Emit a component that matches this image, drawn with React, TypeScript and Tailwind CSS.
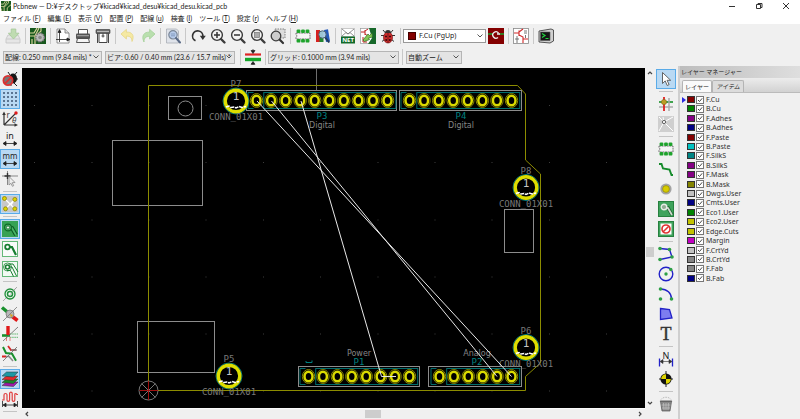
import type { ReactNode } from "react";

const layers = [
  { name: "F.Cu", color: "bg-[#840000]" },
  { name: "B.Cu", color: "bg-[#008400]" },
  { name: "F.Adhes", color: "bg-[#840084]" },
  { name: "B.Adhes", color: "bg-[#000084]" },
  { name: "F.Paste", color: "bg-[#840000]" },
  { name: "B.Paste", color: "bg-[#00c2c2]" },
  { name: "F.SilkS", color: "bg-[#008484]" },
  { name: "B.SilkS", color: "bg-[#840084]" },
  { name: "F.Mask", color: "bg-[#840084]" },
  { name: "B.Mask", color: "bg-[#848400]" },
  { name: "Dwgs.User", color: "bg-[#c2c2c2]" },
  { name: "Cmts.User", color: "bg-[#000084]" },
  { name: "Eco1.User", color: "bg-[#008400]" },
  { name: "Eco2.User", color: "bg-[#c2c200]" },
  { name: "Edge.Cuts", color: "bg-[#c2c200]" },
  { name: "Margin", color: "bg-[#c200c2]" },
  { name: "F.CrtYd", color: "bg-[#c2c2c2]" },
  { name: "B.CrtYd", color: "bg-[#848484]" },
  { name: "F.Fab", color: "bg-[#848484]" },
  { name: "B.Fab", color: "bg-[#000084]" },
];

const menus = [
  { label: "ファイル", mnemonic: "F" },
  { label: "編集", mnemonic: "E" },
  { label: "表示", mnemonic: "V" },
  { label: "配置", mnemonic: "P" },
  { label: "配線", mnemonic: "u" },
  { label: "検査", mnemonic: "I" },
  { label: "ツール", mnemonic: "T" },
  { label: "設定", mnemonic: "r" },
  { label: "ヘルプ", mnemonic: "H" },
];

type Tool = {
  name: string;
  icon: ReactNode;
  active?: boolean;
};

const GREEN = "#1f8f3a";

const magnifier = (
  <>
    <circle cx="7" cy="7" r="5.4" fill="#f4f4f4" stroke="#3c3c3c" strokeWidth="1.4" />
    <path d="M11 11L14.500 14.500" stroke="#3c3c3c" strokeWidth="2.4" strokeLinecap="round" />
  </>
);

const chip = (
  <>
    <path d="M1 5H15V11H1V9.2a1.3 1.3 0 0 0 0-2.4Z" fill="#f6f6f6" stroke="#555" strokeWidth=".8" strokeDasharray="2 .6" />
    {[3.5, 8, 12.5].map((x) => (
      <g key={x} fill="#1ea32c">
        <rect x={x - 1.9} y="1.4" width="3.8" height="3.6" rx="1.2" />
        <rect x={x - 1.9} y="11" width="3.8" height="3.6" rx="1.2" />
      </g>
    ))}
  </>
);

const topGroups: Tool[][] = [
  [
    {
      name: "Save",
      icon: (
        <g opacity=".5">
          <path d="M3 7h10l2 4v4H1v-4Z" fill="#ddd" stroke="#999" strokeWidth=".8" />
          <path d="M1.5 11h13" stroke="#999" strokeWidth=".8" />
          <path d="M6.2 1h4.6v4.2H14L8.5 11 3.4 5.2h2.8Z" fill="#8fc974" stroke="#5da244" strokeWidth=".8" />
        </g>
      ),
    },
  ],
  [
    {
      name: "Footprint editor",
      icon: (
        <>
          <rect width="16" height="16" fill="#17581d" />
          <path d="M0 5h4l3-5M0 8h5l4-8M5 16V9l6-6V0M2 16V11" stroke="#d8d39a" strokeWidth="1.2" fill="none" />
          <circle cx="10" cy="9.5" r="4.3" fill="#bbb" stroke="#777" strokeWidth="1.6" strokeDasharray="1.4 .9" />
          <circle cx="10" cy="9.5" r="1.8" fill="#8a8a8a" />
        </>
      ),
    },
  ],
  [
    {
      name: "Page settings",
      icon: (
        <>
          <path d="M2 1h8l4 4v10H2Z" fill="#fff" stroke="#777" strokeWidth=".8" />
          <path d="M10 1v4h4" fill="#ddd" stroke="#777" strokeWidth=".8" />
          <path d="M4.5 2v12M1 11.5h14M4.5 1.6L3 4.4h3ZM15 11.5l-3-1.5v3Z" fill="#222" stroke="#222" strokeWidth=".8" />
        </>
      ),
    },
    {
      name: "Print",
      icon: (
        <>
          <path d="M3.5 6V1.5h9V6" fill="#fff" stroke="#555" />
          <rect x="1" y="5.5" width="14" height="5.5" rx="1" fill="#555" />
          <rect x="2" y="7" width="12" height="1.3" fill="#999" />
          <path d="M2.5 10.5h11l1 4h-13Z" fill="#f5f5f5" stroke="#444" strokeWidth=".9" />
        </>
      ),
    },
    {
      name: "Plot",
      icon: (
        <>
          <path d="M4 4h8v10.5H4Z" fill="#fff" stroke="#444" />
          <rect x="1" y="1.5" width="14" height="4" rx=".6" fill="#666" stroke="#333" strokeWidth=".6" />
          <path d="M2 3.4h12" stroke="#ddd" strokeWidth=".8" />
          <path d="M2.5 5.5V15M13.5 5.5V15M8 5.5v4M6.5 8h3" stroke="#333" strokeWidth=".9" />
        </>
      ),
    },
  ],
  [
    {
      name: "Undo",
      icon: <path d="M1 6l5.4-4.6v2.8C11.500 3.600 15 7 12 13.500 12 9.500 10 8 6.400 8.200V11Z" fill="#f5e9a3" stroke="#e6d684" strokeWidth=".8" />,
    },
    {
      name: "Redo",
      icon: <path d="M15 6L9.600 1.400v2.800C4 3.600 1 8 4 14 4 10 6 8.200 9.600 8.400V11Z" fill="#b9dfae" stroke="#a5d199" strokeWidth=".8" />,
    },
  ],
  [
    {
      name: "Find",
      icon: (
        <>
          <path d="M1.500 1h10l2 2v12h-12Z" fill="#dfe3ea" stroke="#a8adb5" strokeWidth=".8" />
          <circle cx="8" cy="6.800" r="4.200" fill="#b7cbea" stroke="#7b8797" strokeWidth="1.200" />
          <path d="M5.800 6h4.400M6 7.800h4" stroke="#6d86ad" strokeWidth=".7" />
          <path d="M11 10l4 4.500" stroke="#5a6a86" strokeWidth="2" strokeLinecap="round" />
        </>
      ),
    },
  ],
  [
    {
      name: "Redraw",
      icon: (
        <>
          <path d="M5.500 12.800A5.200 5.200 0 1 1 12.900 8.500" fill="none" stroke="#333" strokeWidth="1.700" />
          <path d="M9.800 7.800h6L12.800 12Z" fill="#333" />
        </>
      ),
    },
    { name: "Zoom in", icon: <>{magnifier}<path d="M4 7h6M7 4v6" stroke="#333" strokeWidth="1.500" /></> },
    { name: "Zoom out", icon: <>{magnifier}<path d="M4 7h6" stroke="#333" strokeWidth="1.500" /></> },
    { name: "Zoom to fit", icon: <>{magnifier}<rect x="4.500" y="4.500" width="5" height="5" fill="#aaa" stroke="#777" strokeWidth=".7" /></> },
    {
      name: "Zoom to selection",
      icon: (
        <>
          <rect x="5" y="1" width="10" height="9" fill="#ddd" stroke="#666" strokeWidth=".8" strokeDasharray="1.500 1" />
          <circle cx="6" cy="8" r="4.800" fill="#ccc" stroke="#3c3c3c" strokeWidth="1.300" />
          <path d="M9.800 11.800l3.200 3.200" stroke="#333" strokeWidth="2.200" strokeLinecap="round" />
        </>
      ),
    },
  ],
  [
    { name: "Footprint viewer", icon: chip },
    {
      name: "Library browser",
      icon: (
        <>
          <rect x="1" y="2" width="4" height="12" fill="#d62020" />
          <rect x="4.500" y="3" width="4" height="11" fill="#23852f" />
          <path d="M9 2l4-.8 2 12-4 .8Z" fill="#2458b8" />
          <circle cx="7.500" cy="6.500" r="3.700" fill="#a9cbe6" fillOpacity=".9" stroke="#4e6374" />
          <path d="M10.200 9.500l4 5" stroke="#23395c" strokeWidth="2" />
        </>
      ),
    },
  ],
  [
    {
      name: "Netlist",
      icon: (
        <>
          <rect x="1.500" y=".5" width="13" height="8" fill="#fff" stroke="#aaa" strokeWidth=".6" />
          <path d="M2 8L6 4.500 8 6l2-1.500L14 8M2 1l6 5 6-5" fill="none" stroke="#777" strokeWidth=".8" />
          <rect x="1" y="8.500" width="14" height="7" fill="#126b2a" />
          <text x="8" y="14.300" textAnchor="middle" fontSize="6" fontWeight="700" fill="#fff">NET</text>
        </>
      ),
    },
    {
      name: "Update from schematic",
      icon: (
        <>
          <rect x=".5" y=".5" width="15" height="15" fill="#fff" stroke="#999" strokeWidth=".7" />
          <path d="M9 0h7v16H8l4-6Z" fill="#17682a" />
          <path d="M1 4h4M5 2v5M5 3l3-2M5 6l3 2M3 9v5h4" stroke="#c01f1f" strokeWidth="1" fill="none" />
          <path d="M3 12l5-6 1.500 1.500L12 5l.5 4-4 1 1 1.500-5 2Z" fill="#83c654" stroke="#2f6b22" strokeWidth=".7" />
        </>
      ),
    },
    {
      name: "Design rules check",
      icon: (
        <>
          <path d="M3 2l2.500 3M13 2l-2.500 3M1 7.500h3M15 7.500h-3M2 13.500l3-2.500M14 13.500L11 11" stroke="#333" strokeWidth="1" />
          <ellipse cx="8" cy="9.500" rx="4.500" ry="5.500" fill="#d22e2e" stroke="#6f1414" strokeWidth=".7" />
          <path d="M5 5a3 3 0 0 1 6 0Z" fill="#333" />
          <path d="M8 5v10" stroke="#641010" strokeWidth=".8" />
          <g fill="#3b0b0b">
            <circle cx="6" cy="8.500" r="1" />
            <circle cx="10" cy="8.500" r="1" />
            <circle cx="6.200" cy="12" r="1" />
            <circle cx="9.800" cy="12" r="1" />
          </g>
        </>
      ),
    },
  ],
];

const leftGroups: Tool[][] = [
  [
    {
      name: "Disable DRC",
      icon: (
        <>
          <path d="M6 1l2 3M15 1l-2.500 3M13 8h3M12 12l3 3M9 12v3" stroke="#222" strokeWidth="1" />
          <ellipse cx="11" cy="7.500" rx="4" ry="5" fill="#151515" />
          <circle cx="6" cy="9.500" r="4.600" fill="#777" stroke="#dc3030" strokeWidth="1.800" />
          <path d="M2.800 12.700l6.400-6.400" stroke="#dc3030" strokeWidth="1.800" />
        </>
      ),
    },
    {
      name: "Show grid",
      active: true,
      icon: (
        <g fill="#273f5c">
          {[2, 6, 10, 14].flatMap((x) =>
            [2, 6, 10, 14].map((y) => <rect key={`${x}-${y}`} x={x - 0.8} y={y - 0.8} width="1.600" height="1.600" />)
          )}
        </g>
      ),
    },
    {
      name: "Polar coordinates",
      icon: (
        <>
          <path d="M2 14V3M2 14h11M2 14L14 2" stroke="#333" strokeWidth="1.200" />
          <path d="M2 .5L.2 4h3.600ZM16 14l-3.500-1.800v3.600Z" fill="#333" />
          <circle cx="14" cy="2" r="1.700" fill="#e01b1b" />
          <text x="4.500" y="7" fontSize="8" fill="#333">r</text>
          <text x="10" y="12" fontSize="8" fontStyle="italic" fill="#333">θ</text>
        </>
      ),
    },
    {
      name: "Inches",
      icon: (
        <>
          <text x="8" y="8" textAnchor="middle" fontSize="9" fill="#222">in</text>
          <path d="M3 12.500h10M1 12.500l3-2v4ZM15 12.500l-3-2v4Z" fill="#222" stroke="#222" strokeWidth=".8" />
        </>
      ),
    },
    {
      name: "Millimeters",
      active: true,
      icon: (
        <>
          <text x="8" y="8" textAnchor="middle" fontSize="8" fill="#222">mm</text>
          <path d="M3 12.500h10M1 12.500l3-2v4ZM15 12.500l-3-2v4Z" fill="#222" stroke="#222" strokeWidth=".8" />
        </>
      ),
    },
    {
      name: "Full crosshair",
      icon: (
        <>
          <path d="M5.500 0v14M0 5h16" stroke="#888" strokeWidth="1" />
          <path d="M5.500 2v6M2.500 5h6" stroke="#333" strokeWidth="1.400" />
          <path d="M7 5.500l6 6-2.800.2 1.500 3-1.300.6-1.400-3L7 14Z" fill="#eee" stroke="#888" strokeWidth=".8" />
        </>
      ),
    },
  ],
  [
    {
      name: "Show ratsnest",
      active: true,
      icon: (
        <>
          <rect width="16" height="16" fill="#c8c8c8" />
          <path d="M2.500 2.500l10 10M3.500 13l9-9.500M9 9l4-6" stroke="#fff" strokeWidth="1.200" />
          {[[2.5, 2.5], [12.8, 3.4], [3.5, 12.8], [12.8, 12.8]].map(([x, y]) => (
            <circle key={`${x}-${y}`} cx={x} cy={y} r="2" fill="#ddd400" stroke="#817a00" strokeWidth=".7" />
          ))}
        </>
      ),
    },
  ],
  [
    {
      name: "Filled zones",
      active: true,
      icon: (
        <>
          <rect width="16" height="16" fill="#36a255" />
          <path d="M6 6.500l4 .5 4 7" fill="none" stroke="#0d5724" strokeWidth="4" />
          <path d="M6 6.500l4 .5 4 7" fill="none" stroke="#48b567" strokeWidth="1.800" />
          <circle cx="6" cy="6.500" r="3.400" fill="#55b56f" stroke="#0d6b28" strokeWidth="1.200" />
          <circle cx="6" cy="6.500" r="1.600" fill="#eef7ee" stroke="#0d6b28" strokeWidth=".8" />
        </>
      ),
    },
    {
      name: "Hide zones",
      icon: (
        <>
          <rect x=".5" y=".5" width="15" height="15" fill="#fafafa" stroke="#65b878" />
          <path d="M6 6h4l4 8" fill="none" stroke="#187d31" strokeWidth="2.200" />
          <circle cx="5.500" cy="6" r="2.300" fill="#fff" stroke="#187d31" strokeWidth="1.800" />
        </>
      ),
    },
    {
      name: "Zone outlines",
      icon: (
        <>
          <rect x=".5" y=".5" width="15" height="15" fill="#f3faf3" stroke="#65b878" />
          <path d="M7 6h3l4.500 9M7 3h4l5 8M5 9.500h3.500l3 6" fill="none" stroke="#187d31" strokeWidth="1" />
          <circle cx="5.500" cy="6" r="4" fill="none" stroke="#187d31" strokeWidth=".8" />
          <circle cx="5.500" cy="6" r="2" fill="#fff" stroke="#187d31" strokeWidth="1.600" />
        </>
      ),
    },
  ],
  [
    {
      name: "Via sketch",
      icon: (
        <>
          <path d="M1 15L15 1" stroke="#999" strokeWidth=".8" />
          <circle cx="8" cy="8" r="5" fill="#edf7ed" stroke={GREEN} strokeWidth="1.300" />
          <circle cx="8" cy="8" r="2.500" fill="#fff" stroke={GREEN} strokeWidth="1.500" />
          <path d="M6 11L14 2" stroke="#999" strokeWidth=".6" />
        </>
      ),
    },
    {
      name: "Pad sketch",
      icon: (
        <>
          <path d="M0 1.500l6 5" stroke="#19902d" strokeWidth="3.400" />
          <path d="M9 9.500l6.500 5" stroke="#e01717" strokeWidth="3.600" />
          <circle cx="8" cy="8" r="4" fill="#b8b8b8" stroke="#777" strokeWidth=".8" />
          <path d="M8 8l3 1-2 2.500Z" fill="#d9a21c" />
          <path d="M1 15L15 1" stroke="#777" strokeWidth=".8" />
        </>
      ),
    },
    {
      name: "Track sketch",
      icon: (
        <>
          <path d="M0 9.500h8" stroke="#19902d" strokeWidth="2.600" />
          <path d="M8 8h8M8 11.300h8" stroke="#5fb56d" strokeWidth="1" strokeDasharray="1.500 .7" />
          <path d="M6 0v9" stroke="#e01717" strokeWidth="3.400" />
          <path d="M4.500 11v4M8 11v4" stroke="#e58080" strokeWidth="1" />
          <path d="M1 15L16 1" stroke="#666" strokeWidth=".8" />
        </>
      ),
    },
    {
      name: "High contrast",
      icon: (
        <>
          <path d="M1 1l3 6 6 .8 4 7" fill="none" stroke="#19902d" strokeWidth="2" />
          <path d="M6 0l3 4h5M0 10.500h4" fill="none" stroke="#d82727" strokeWidth="1.800" />
          <path d="M4 10.500h3l4 4.500M9 4h6" fill="none" stroke="#888" strokeWidth="1.500" />
          <path d="M1 15L15 1" stroke="#666" strokeWidth=".8" />
        </>
      ),
    },
  ],
  [
    {
      name: "Layers manager",
      active: true,
      icon: (
        <g stroke="#333" strokeWidth=".5">
          <path d="M0 14.500L4.500 11H16l-4.500 4.500Z" fill="#a01aac" />
          <path d="M0 11.500L4.500 8H16l-4.500 4.500Z" fill="#178a2b" />
          <path d="M0 8.500L4.500 5H16l-4.500 4.500Z" fill="#e22a2a" />
          <path d="M0 5L4.500 1H16l-4.500 5Z" fill="#1c98a4" />
        </g>
      ),
    },
    {
      name: "Microwave toolbar",
      icon: (
        <>
          <path d="M0 9h2V4a1.500 1.500 0 0 1 3 0v5a1.300 1.300 0 0 0 2.600 0V2.500a1.300 1.300 0 0 1 2.600 0V9a1.300 1.300 0 0 0 2.600 0V3.500a1 1 0 0 1 2 0H16" fill="none" stroke="#e04040" strokeWidth="1.200" />
          <path d="M.5 10v6M15.500 10v6M3 14h10M1 14l3-1.800v3.600ZM15 14l-3-1.800v3.600Z" fill="#222" stroke="#222" strokeWidth=".8" />
        </>
      ),
    },
  ],
  [],
];

const rightGroups: Tool[][] = [
  [
    {
      name: "Select",
      active: true,
      icon: <path d="M4.500 1.500v11l2.700-2.600 2 4.600 1.900-.9-2-4.300h3.600Z" fill="#fff" stroke="#555" strokeWidth=".9" />,
    },
  ],
  [
    {
      name: "Highlight net",
      icon: (
        <>
          <path d="M1 6h14" stroke="#2c9a3c" strokeWidth="1.800" />
          <path d="M1 11h14M11 2v13" stroke="#aaa" strokeWidth="1.500" />
          <path d="M6 1v14" stroke="#df2020" strokeWidth="1.800" />
          <circle cx="6" cy="6" r="2.600" fill="#bd9d25" stroke="#7d6a1d" strokeWidth=".6" />
        </>
      ),
    },
    {
      name: "Local ratsnest",
      icon: (
        <>
          <rect width="16" height="16" fill="#cfcfcf" />
          <path d="M6 6L1 1M6 6l9-5M6 6L1 15M6 6l9 9M6 6L5 1" stroke="#fff" strokeWidth="1" />
          <circle cx="6" cy="6" r="1.700" fill="#eee" stroke="#666" />
        </>
      ),
    },
  ],
  [
    { name: "Add footprint", icon: chip },
    {
      name: "Route track",
      icon: <path d="M1 3h2.500L5 7.500l6.500 1L13.500 14H15" fill="none" stroke="#158b2b" strokeWidth="1.900" />,
    },
    {
      name: "Add via",
      icon: (
        <>
          <circle cx="8" cy="8" r="5.600" fill="#a3a3a3" />
          <circle cx="8" cy="8" r="3.400" fill="#d8cc00" stroke="#8b8300" strokeWidth=".6" />
        </>
      ),
    },
    {
      name: "Add zone",
      icon: (
        <>
          <rect x=".5" y=".5" width="15" height="15" fill="#3fa35c" stroke="#27813f" />
          <path d="M6 6.500l4 .5 4 7" fill="none" stroke="#1d6932" strokeWidth="3.500" />
          <path d="M6 6.500l4 .5 4 7" fill="none" stroke="#cfd8cf" strokeWidth="1.800" />
          <circle cx="6" cy="6" r="2.800" fill="#91ad94" stroke="#e7ece7" strokeWidth="1.400" />
        </>
      ),
    },
    {
      name: "Add keepout area",
      icon: (
        <>
          <rect x=".5" y=".5" width="15" height="15" fill="#3fa35c" stroke="#27813f" />
          <rect x="2.500" y="2.500" width="11" height="11" fill="#fff" />
          <circle cx="8" cy="8" r="4" fill="#fff" stroke="#e03434" strokeWidth="1.700" />
          <path d="M5.200 10.800l5.600-5.600" stroke="#e03434" strokeWidth="1.600" />
        </>
      ),
    },
  ],
  [
    {
      name: "Draw line",
      icon: (
        <>
          <path d="M2 2.500l9.500 1L14 11 2 13.500" fill="none" stroke="#2222c8" strokeWidth="1.400" />
          {[[2, 2.5], [11.5, 3.5], [14, 11], [2, 13.5]].map(([x, y]) => (
            <circle key={`${x}-${y}`} cx={x} cy={y} r="1.800" fill="#2e9f46" />
          ))}
        </>
      ),
    },
    {
      name: "Draw circle",
      icon: (
        <>
          <circle cx="8" cy="8" r="6.800" fill="none" stroke="#2222c8" strokeWidth="1.400" />
          <circle cx="8" cy="8" r="1.700" fill="#2e9f46" />
          <circle cx="12.800" cy="3.500" r="1.700" fill="#2e9f46" />
        </>
      ),
    },
    {
      name: "Draw arc",
      icon: (
        <>
          <path d="M2.500 3C9 3 13.500 7 13.500 13" fill="none" stroke="#2222c8" strokeWidth="1.400" />
          {[[2.5, 3], [13.5, 13], [2.5, 13]].map(([x, y]) => (
            <circle key={`${x}-${y}`} cx={x} cy={y} r="1.800" fill="#2e9f46" />
          ))}
        </>
      ),
    },
    {
      name: "Draw polygon",
      icon: <path d="M2.500 2.500L11.500 3.500 14 12l-11.500 1.500Z" fill="#7d7df0" stroke="#2222c8" strokeWidth="1.300" />,
    },
    {
      name: "Add text",
      icon: <text x="8" y="14" textAnchor="middle" fontSize="18" fill="#333" stroke="#333" strokeWidth=".4" className="font-['Liberation_Serif',serif]">T</text>,
    },
  ],
  [
    {
      name: "Add dimension",
      icon: (
        <>
          <path d="M1.500 7.500v8M14.500 7.500v8" stroke="#2222c8" strokeWidth="1.300" />
          <path d="M4 10.500h8M2 10.500l3-2v4ZM14 10.500l-3-2v4Z" fill="#333" stroke="#333" strokeWidth=".6" />
          <text x="8" y="7.500" textAnchor="middle" fontSize="9" fill="#222">N</text>
        </>
      ),
    },
    {
      name: "Add target",
      icon: (
        <>
          <path d="M8 0v16M1 8h14" stroke="#222" strokeWidth="1" />
          <circle cx="8" cy="8" r="5.600" fill="#111" />
          <path d="M8 8V3.200A4.800 4.800 0 0 0 3.200 8ZM8 8v4.800A4.800 4.800 0 0 0 12.800 8Z" fill="#ddd400" />
        </>
      ),
    },
  ],
  [
    {
      name: "Delete",
      icon: (
        <>
          <path d="M3 3.500c2-3 8-3 10 0" fill="none" stroke="#bbb" strokeDasharray="1.500 1" />
          <path d="M2.500 5.500h11L12 15H4Z" fill="#888" stroke="#555" strokeWidth=".7" />
          <path d="M5.500 7l.5 7M8 7v7M10.500 7l-.5 7M3.500 9h9M4 12h8" stroke="#ccc" strokeWidth=".6" />
          <rect x="1.800" y="4.500" width="12.400" height="1.600" rx=".8" fill="#666" />
        </>
      ),
    },
  ],
];

function Icon({ children }: { children: ReactNode }) {
  return (
    <svg viewBox="0 0 16 16" className="block size-4 overflow-visible font-['Noto_Sans']" aria-hidden="true">
      {children}
    </svg>
  );
}

function ToolButton({ tool }: { tool: Tool }) {
  return (
    <button
      type="button"
      aria-label={tool.name}
      className={
        tool.active
          ? "flex size-5 shrink-0 items-center justify-center border border-[#5aabe8] bg-[#b9d9f3]"
          : "flex size-5 shrink-0 items-center justify-center"
      }
    >
      <Icon>{tool.icon}</Icon>
    </button>
  );
}

function VSeparator() {
  return <div className="mx-0.5 h-4 w-px shrink-0 bg-[#c8c8c8]" />;
}

function VerticalToolbar({ groups }: { groups: Tool[][] }) {
  return (
    <div className="flex w-5 shrink-0 flex-col items-center">
      {groups.map((group, index) => (
        <div key={index} className="flex flex-col items-center">
          {index > 0 && <div className="my-0.5 h-px w-3.5 bg-[#c4c4c4]" />}
          {group.map((tool) => (
            <ToolButton key={tool.name} tool={tool} />
          ))}
        </div>
      ))}
    </div>
  );
}

function Combo({ label, value, className }: { label: string; value: string; className: string }) {
  return (
    <div className={`relative flex h-[13px] shrink-0 items-center border border-[#b5b5b5] bg-[#e4e4e4] ${className}`}>
      <select aria-label={label} className="h-full w-full appearance-none pl-px text-[7px] leading-[11px] text-[#222] outline-none">
        <option>{value}</option>
      </select>
      <svg viewBox="0 0 6 4" className="pointer-events-none absolute right-0.5 h-1 w-1.5" aria-hidden="true">
        <path d="M.5.500L3 3 5.500.500" fill="none" stroke="#444" strokeWidth=".9" />
      </svg>
    </div>
  );
}

function Header() {
  return (
    <header className="flex shrink-0 flex-col">
      <div className="flex h-3 items-center bg-white">
        <div className="ml-px size-2.5">
          <svg viewBox="0 0 16 16" className="block size-2.5" aria-hidden="true">
            <rect width="16" height="16" fill="#17581d" />
            <path d="M0 5h4l3-5M0 9h5l5-9M5 16V10l7-7V0M1 16v-4M10 16v-5l6-5" stroke="#d8d39a" strokeWidth="1.400" fill="none" />
          </svg>
        </div>
        <h1 className="ml-0.5 flex-1 text-[7px] leading-3 whitespace-nowrap">
          Pcbnew — D:¥デスクトップ¥kicad¥kicad_desu¥kicad_desu.kicad_pcb
        </h1>
        <div className="flex h-3 items-center gap-[15px] pr-2">
          <button type="button" aria-label="Minimize" className="flex h-3 w-3 items-center justify-center">
            <svg viewBox="0 0 8 8" className="size-2"><path d="M1 4.500h6" stroke="#333" /></svg>
          </button>
          <button type="button" aria-label="Restore" className="flex h-3 w-3 items-center justify-center">
            <svg viewBox="0 0 8 8" className="size-2">
              <path d="M1.500 2.500h4v4h-4ZM3 2.500v-1h4v4H5.500" fill="none" stroke="#333" />
            </svg>
          </button>
          <button type="button" aria-label="Close" className="flex h-3 w-3 items-center justify-center">
            <svg viewBox="0 0 8 8" className="size-2"><path d="M1 1l6 6M7 1L1 7" stroke="#333" /></svg>
          </button>
        </div>
      </div>
      <nav className="flex h-3 items-center gap-[7px] bg-white pl-[3px]">
        {menus.map((menu) => (
          <button key={menu.label} type="button" className="text-[7px] leading-3 whitespace-nowrap">
            {menu.label} (<u>{menu.mnemonic}</u>)
          </button>
        ))}
      </nav>
    </header>
  );
}

function TopToolbar() {
  return (
    <div className="flex h-6 shrink-0 items-center pl-[3px]">
      {topGroups.map((group, index) => (
        <div key={index} className="flex items-center">
          {index > 0 && <VSeparator />}
          {group.map((tool) => (
            <ToolButton key={tool.name} tool={tool} />
          ))}
        </div>
      ))}
      <VSeparator />
      <div className="relative flex h-[14px] w-[83px] shrink-0 items-center border border-[#999] bg-white">
        <span className="pointer-events-none absolute left-1 size-2 border border-[#400] bg-[#840000]" />
        <select aria-label="Active layer" className="h-full w-full appearance-none pl-[15px] font-['Noto_Sans'] text-[7px] leading-3 text-[#222] outline-none">
          <option>F.Cu (PgUp)</option>
        </select>
        <svg viewBox="0 0 6 4" className="pointer-events-none absolute right-0.5 h-1 w-1.5" aria-hidden="true">
          <path d="M.5.500L3 3 5.500.500" fill="none" stroke="#444" strokeWidth=".9" />
        </svg>
      </div>
      <ToolButton
        tool={{
          name: "Layer pair",
          icon: (
            <>
              <rect width="16" height="16" fill="#840000" />
              <path d="M0 6h5M11 6h5" stroke="#1ba02d" strokeWidth="1.600" />
              <path d="M10.500 5a3.200 3.200 0 1 0-.5 4.500M9 6h3" fill="none" stroke="#eee" strokeWidth="1.300" />
            </>
          ),
        }}
      />
      <VSeparator />
      <ToolButton
        tool={{
          name: "Schematic editor",
          icon: (
            <>
              <rect x=".5" y=".5" width="15" height="15" fill="#fff" stroke="#888" strokeWidth=".8" />
              <path d="M1 5h5M6 2.500V8M6 4l4-3M6 7l4 2v6M10 11h5" stroke="#d02828" strokeWidth="1.100" fill="none" />
              <path d="M4 8v7M2 11h4M11 3h3M11 5h3M12.500 7v3" stroke="#666" strokeWidth=".9" />
            </>
          ),
        }}
      />
      <VSeparator />
      <ToolButton
        tool={{
          name: "Scripting console",
          icon: (
            <>
              <path d="M1 3l12-2 2.500 1v11L12 15 1 14Z" fill="#d0d0d0" stroke="#444" strokeWidth=".9" />
              <path d="M2.500 4h9.500v8.500H2.500Z" fill="#151515" stroke="#555" strokeWidth=".6" />
              <path d="M4 5.500l3 2-3 2M7.500 10.500h3" fill="none" stroke="#24d33f" strokeWidth="1.200" />
            </>
          ),
        }}
      />
    </div>
  );
}

function OptionsBar() {
  return (
    <div className="flex h-[18px] shrink-0 items-center pl-[3px]">
      <Combo label="Track width" value="配線: 0.250 mm (9.84 mils) *" className="w-[99px]" />
      <Combo label="Via size" value="ビア: 0.60 / 0.40 mm (23.6 / 15.7 mils) *" className="ml-[3px] w-[130px]" />
      <div className="ml-[3px] flex items-center">
        <VSeparator />
        <ToolButton
          tool={{
            name: "Auto track width",
            icon: (
              <>
                <path d="M0 5.500h16" stroke="#df2525" strokeWidth="2.200" />
                <path d="M0 10.500h16" stroke="#14a52a" strokeWidth="3.400" />
                <path d="M8 0v2M8 4.500L6 1.500h4ZM8 16v-2M8 12.500l-2 2.800h4Z" fill="#222" stroke="#222" strokeWidth=".7" />
              </>
            ),
          }}
        />
        <VSeparator />
      </div>
      <Combo label="Grid" value="グリッド: 0.1000 mm (3.94 mils)" className="w-[131px]" />
      <div className="mx-px flex">
        <VSeparator />
      </div>
      <Combo label="Zoom" value="自動ズーム" className="w-[56px]" />
    </div>
  );
}

function Pad({ x, y }: { x: number; y: number }) {
  return (
    <g fill="none">
      <ellipse cx={x} cy={y} rx="6.200" ry="7" stroke="#858500" strokeWidth="1" />
      <ellipse cx={x} cy={y} rx="4" ry="4.800" stroke="#dada00" strokeWidth="2.500" />
    </g>
  );
}

type HeaderBlock = {
  x1: number;
  x2: number;
  y: number;
  first: number;
  last: number;
  count: number;
};

function PinHeader({ x1, x2, y, first, last, count }: HeaderBlock) {
  const pitch = (last - first) / (count - 1);
  return (
    <g fill="none">
      <rect x={x1} y={y - 10} width={x2 - x1} height="20" stroke="#8c8c8c" />
      <path d={`M${first - 3} ${y - 8}H${first - 8.5}V${y + 8}H${first - 3}`} stroke="#006c6c" />
      <rect x={first + pitch / 2} y={y - 8} width={last - first + 1} height="16" stroke="#006c6c" />
      {Array.from({ length: count }, (_, i) => (
        <Pad key={i} x={first + pitch * i} y={y} />
      ))}
    </g>
  );
}

function MountingHole({ x, y, name }: { x: number; y: number; name: string }) {
  return (
    <g textAnchor="middle" fill="#787878" fontSize="9">
      <circle cx={x} cy={y} r="13" fill="none" stroke="#007c7c" />
      <circle cx={x} cy={y} r="10.800" fill="none" stroke="#dede00" strokeWidth="3.400" />
      <text x={x} y={y - 14}>{name}</text>
      <text x={x} y={y + 19}>CONN_01X01</text>
      <text x={x} y={y - 1} fill="#c4c4c4" fontSize="11">1</text>
      <path d={`M${x - 10} ${y + 6}l3-1 2 1.500 3-.5 2 1 3-1.500 3 1 4-1`} fill="none" stroke="#fff" strokeWidth="1.500" strokeDasharray="4 .8" />
    </g>
  );
}

const gridColumns = [34.5, 92, 149, 206, 263.5, 320.5, 378, 435, 492, 549.5, 606.5];
const gridRows = [105.5, 162.5, 220, 277, 334, 391];

function Board() {
  return (
    <svg
      viewBox="22 68 623 340"
      preserveAspectRatio="xMinYMin meet"
      className="block h-full w-full bg-black font-['DejaVu_Sans_Mono','Liberation_Mono',monospace]"
      aria-label="Board"
    >
      <g fill="#3c3c3c">
        {gridRows.flatMap((y) =>
          gridColumns.map((x) => <rect key={`${x}-${y}`} x={x - 0.5} y={y - 0.5} width="1" height="1" />)
        )}
      </g>

      <g fill="none" stroke="#8c8c8c">
        <path d="M293 68.500H340M316.500 68V90" stroke="#6e6e6e" />
        <rect x="168.500" y="96.500" width="33" height="23" />
        <circle cx="185.500" cy="108.500" r="7.500" />
        <rect x="112.500" y="140.500" width="90" height="65" />
        <rect x="137.500" y="321.500" width="77" height="51" />
        <rect x="504.500" y="209.500" width="29" height="43" />
      </g>

      <path d="M148.500 85.500H517.500L525.500 94V160L540.500 174V363L525.500 376.500V390.500H148.500Z" fill="none" stroke="#8c8c00" />

      <g fill="none">
        <circle cx="148.500" cy="390.500" r="9.500" stroke="#777" />
        <path d="M141.500 383.500l14 14M155.500 383.500l-14 14" stroke="#777" />
        <path d="M139.500 390.500H158M148.500 381V400" stroke="#a01010" />
      </g>

      <PinHeader x1={246.5} x2={396.5} y={100.5} first={256.5} last={387.5} count={10} />
      <PinHeader x1={399.5} x2={521.5} y={100.5} first={409.5} last={511.5} count={8} />
      <PinHeader x1={298.5} x2={419.5} y={376.5} first={308.5} last={409.5} count={8} />
      <PinHeader x1={428.5} x2={521.5} y={376.5} first={439.5} last={511.5} count={6} />

      <MountingHole x={236} y={101} name="P7" />
      <MountingHole x={526} y={187.5} name="P8" />
      <MountingHole x={229} y={376} name="P5" />
      <MountingHole x={526} y={347.5} name="P6" />

      <g textAnchor="middle" fontSize="9" fill="#008080">
        <text x="322" y="119">P3</text>
        <text x="461" y="119">P4</text>
        <text x="359" y="365">P1</text>
        <text x="477" y="365">P2</text>
        <path d="M306 361v1.500h6v-2" fill="none" stroke="#008080" />
      </g>
      <g textAnchor="middle" fontSize="8" fill="#858585" className="font-['DejaVu_Sans']">
        <text x="322" y="128">Digital</text>
        <text x="461" y="128">Digital</text>
        <text x="359" y="356">Power</text>
        <text x="477" y="356">Analog</text>
      </g>

      <path
        d="M257 101L511.500 376.500M271.500 101L497 376.500M301 101L381.500 376.500H396"
        fill="none"
        stroke="#e8e8e8"
      />
    </svg>
  );
}

function Arrow({ d }: { d: string }) {
  return (
    <svg viewBox="0 0 6 6" className="size-1.5" aria-hidden="true">
      <path d={d} fill="none" stroke="#444" strokeWidth="1.200" />
    </svg>
  );
}

function Canvas() {
  return (
    <main className="grid min-w-0 flex-1 grid-cols-[1fr_10px] grid-rows-[minmax(0,1fr)_11px] pt-0.5">
      <Board />
      <div className="flex flex-col items-center justify-between py-[2px]">
        <Arrow d="M1 4L3 2l2 2" />
        <div className="mt-7 h-2.5 w-2 bg-[#cdcdcd]" />
        <Arrow d="M1 2l2 2 2-2" />
      </div>
      <div className="flex items-center justify-between border-t border-[#fafafa] px-0.5">
        <Arrow d="M4 1L2 3l2 2" />
        <div className="ml-[78px] h-2 w-4 bg-[#cdcdcd]" />
        <Arrow d="M2 1l2 2-2 2" />
      </div>
      <div />
    </main>
  );
}

function LayerManager() {
  return (
    <aside className="flex w-[122px] shrink-0 flex-col border-l-2 border-[#cfcfcf]">
      <h2 className="h-3 bg-linear-to-r from-[#bdbdbd] to-[#dedede] pl-px text-[6px] leading-[12px] whitespace-nowrap">
        レイヤー マネージャー
      </h2>
      <div role="tablist" className="flex h-[15px] items-end border-b border-[#bbb] bg-linear-to-b from-[#ececec] to-[#d2d2d2] pl-[2px]">
        <button type="button" role="tab" aria-selected="true" className="h-3 w-[30px] rounded-t-xs border border-b-0 border-[#b4b4b4] bg-[#fafafa] text-[6px] leading-[11px] whitespace-nowrap">
          レイヤー
        </button>
        <button type="button" role="tab" aria-selected="false" className="h-3 w-[32px] rounded-t-xs border border-b-0 border-[#b4b4b4] bg-[#dcdcdc] text-[6px] leading-[11px] whitespace-nowrap italic">
          アイテム
        </button>
      </div>
      <ul className="mt-[2px] flex h-[188px] flex-col justify-between pl-[2px]">
        {layers.map((layer, index) => (
          <li key={layer.name} className="flex h-[9px] items-center">
            <span className="w-[5px]">
              {index === 0 && (
                <svg viewBox="0 0 4 6" className="block h-1.5 w-1" aria-hidden="true">
                  <path d="M0 0l4 3-4 3Z" fill="#2a2ae0" />
                </svg>
              )}
            </span>
            <label className="flex items-center">
              <span className={`h-[7px] w-2 border border-[#333] ${layer.color}`} />
              <span className="relative ml-px block size-2">
                <input type="checkbox" defaultChecked className="block size-2 appearance-none border border-[#777] bg-white" />
                <svg viewBox="0 0 8 8" className="pointer-events-none absolute inset-0 size-2" aria-hidden="true">
                  <path d="M2 4l1.500 1.500L6.200 2.300" fill="none" stroke="#333" strokeWidth=".9" />
                </svg>
              </span>
              <span className="ml-0.5 font-['Noto_Sans'] text-[7px] leading-[9px] text-[#333]">{layer.name}</span>
            </label>
          </li>
        ))}
      </ul>
    </aside>
  );
}

export default function App() {
  return (
    <div className="flex h-screen w-full flex-col overflow-hidden bg-[#f0f0f0] font-['Lato','Noto_Sans_CJK_JP',sans-serif] text-[#222]">
      <Header />
      <TopToolbar />
      <OptionsBar />
      <div className="flex min-h-0 flex-1 overflow-hidden">
        <div className="flex w-[22px] shrink-0 pt-[3px]">
          <VerticalToolbar groups={leftGroups} />
        </div>
        <Canvas />
        <div className="flex w-[23px] shrink-0 pt-[3px] pl-px">
          <VerticalToolbar groups={rightGroups} />
        </div>
        <LayerManager />
      </div>
    </div>
  );
}
